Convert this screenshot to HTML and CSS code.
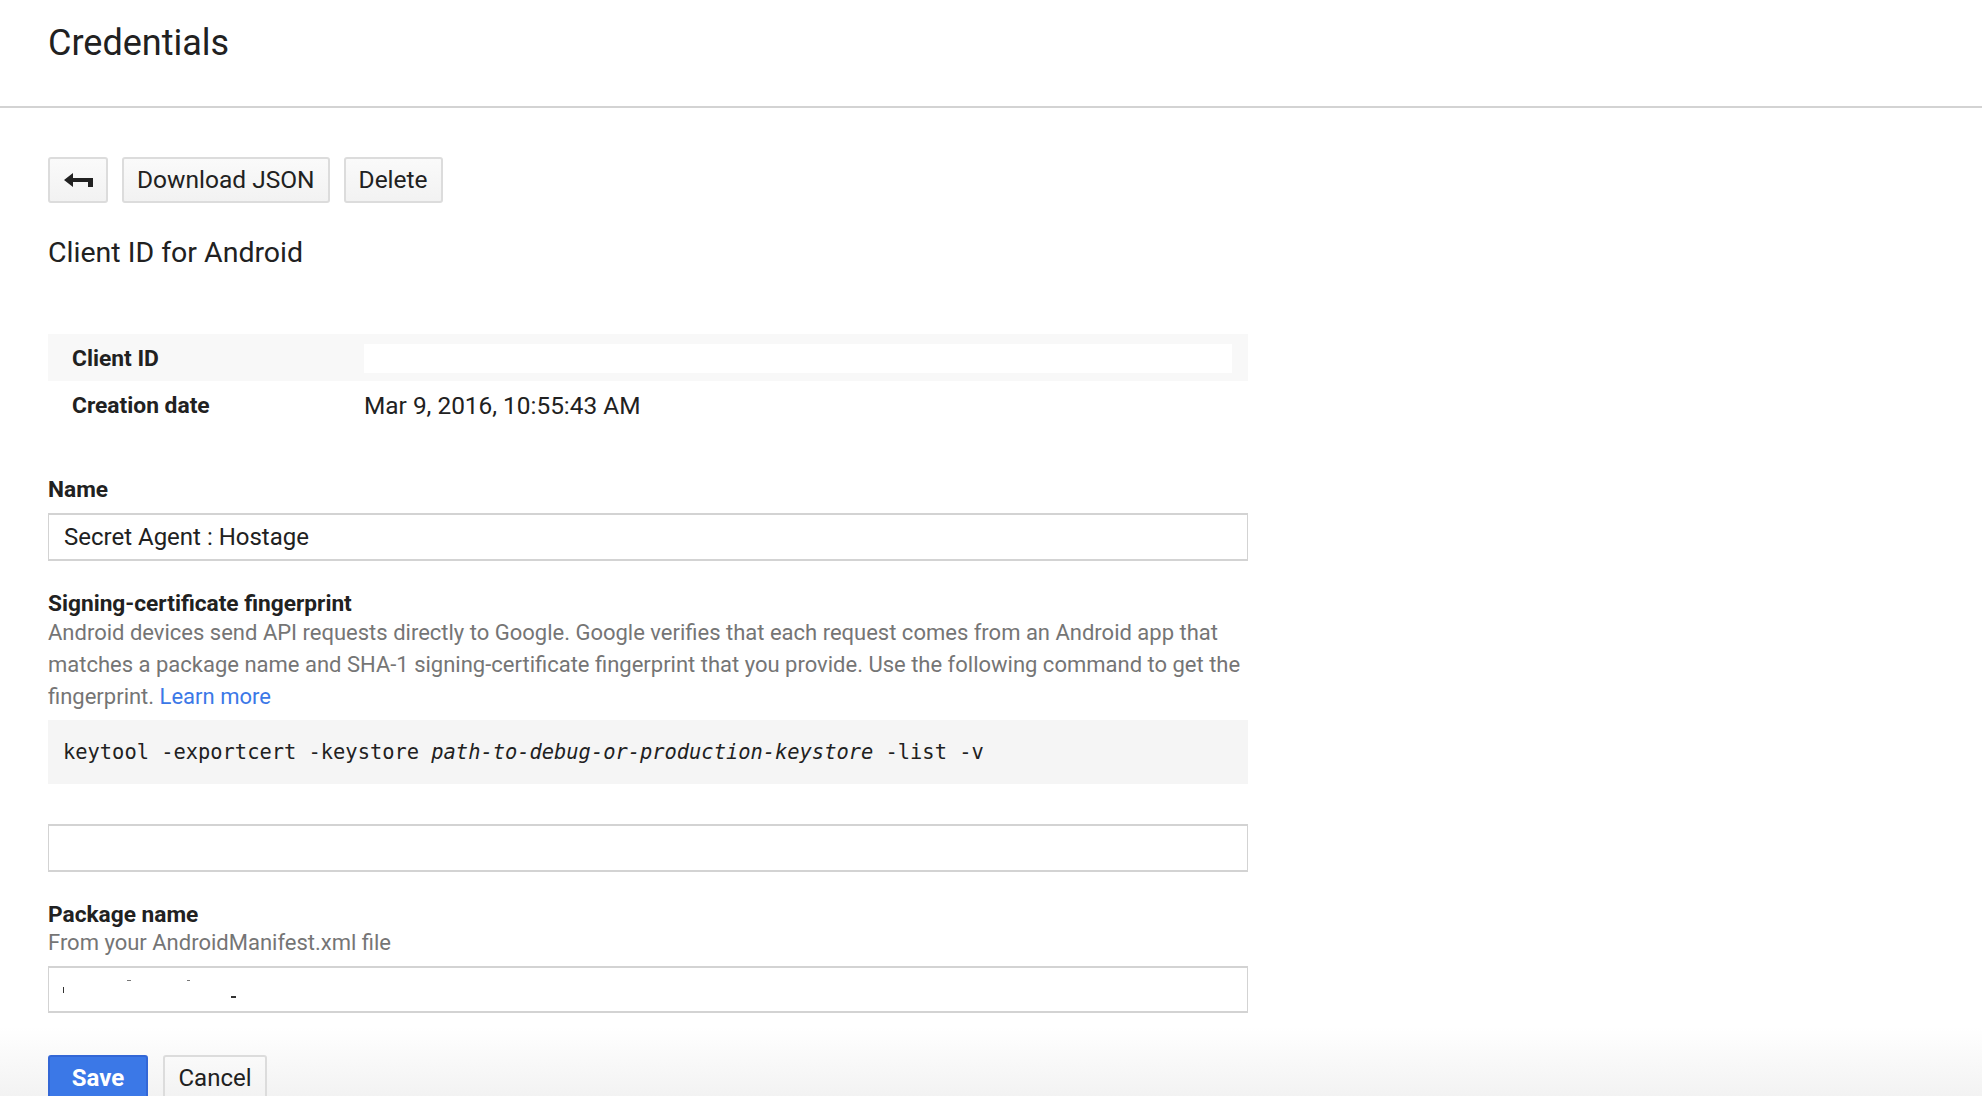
FILE: index.html
```html
<!DOCTYPE html>
<html lang="en">
<head>
<meta charset="utf-8">
<title>Credentials</title>
<link rel="stylesheet" href="styles.css">
</head>
<body>
<header class="page-header">
  <h1 class="page-title">Credentials</h1>
</header>
<main class="content">
  <div class="toolbar">
    <button class="btn btn-icon" type="button" aria-label="Back">
      <svg class="back-icon" viewBox="0 0 29 14" width="29" height="14"><path d="M0 7 L9 0 L9 5 L29 5 L29 14 L24 14 L24 9 L9 9 L9 14 Z" fill="#212121"/></svg>
    </button>
    <button class="btn" type="button">Download JSON</button>
    <button class="btn" type="button">Delete</button>
  </div>

  <h2 class="section-title">Client ID for Android</h2>

  <div class="info-table">
    <div class="info-row shaded">
      <div class="info-label">Client ID</div>
      <div class="info-value"><div class="redacted"></div></div>
    </div>
    <div class="info-row">
      <div class="info-label">Creation date</div>
      <div class="info-value">Mar 9, 2016, 10:55:43 AM</div>
    </div>
  </div>

  <div class="field field-name">
    <div class="field-label">Name</div>
    <div class="text-input">Secret Agent : Hostage</div>
  </div>

  <div class="field field-sign">
    <div class="field-label tight">Signing-certificate fingerprint</div>
    <p class="field-help">Android devices send API requests directly to Google. Google verifies that each request comes from an Android app that matches a package name and SHA-1 signing-certificate fingerprint that you provide. Use the following command to get the fingerprint. <a class="link" href="#">Learn more</a></p>
    <pre class="code-block">keytool -exportcert -keystore <em>path-to-debug-or-production-keystore</em> -list -v</pre>
    <div class="text-input empty"></div>
  </div>

  <div class="field field-package">
    <div class="field-label">Package name</div>
    <div class="field-sub">From your AndroidManifest.xml file</div>
    <div class="text-input package"><span class="mark m1"></span><span class="mark m2"></span><span class="mark m3"></span><span class="mark m4"></span></div>
  </div>
</main>
<footer class="page-footer">
  <button class="btn btn-primary" type="button">Save</button>
  <button class="btn" type="button">Cancel</button>
</footer>
</body>
</html>
```

FILE: styles.css
```css
html, body {
  margin: 0;
  padding: 0;
  height: 1096px;
  overflow: hidden;
  background: #ffffff;
}

body {
  font-family: Roboto, "Noto Sans", "Liberation Sans", sans-serif;
  color: #212121;
}

.page-header {
  border-bottom: 2px solid #d3d3d3;
  padding: 0 48px;
  box-sizing: border-box;
  height: 108px;
}

.page-title {
  margin: 0;
  padding-top: 21px;
  font-size: 36px;
  line-height: 44px;
  font-weight: 400;
  color: #212121;
}

.content {
  padding: 0 48px;
  width: 1200px;
}

.toolbar {
  display: flex;
  gap: 14px;
  margin-top: 49px;
}

.btn {
  font-family: Roboto, "Noto Sans", "Liberation Sans", sans-serif;
  font-size: 24.5px;
  color: #212121;
  height: 46px;
  padding: 0 13px;
  background: linear-gradient(#fafafa, #f2f2f2);
  border: 2px solid #dcdcdc;
  border-radius: 3px;
  display: inline-flex;
  align-items: center;
  justify-content: center;
  box-sizing: border-box;
  line-height: 1;
}

.btn-icon {
  width: 60px;
  padding: 0;
}

.back-icon {
  display: block;
}

.section-title {
  margin: 32px 0 0;
  font-size: 28.5px;
  line-height: 36px;
  font-weight: 400;
}

.info-table {
  margin-top: 63px;
}

.info-row {
  display: flex;
  align-items: center;
  font-size: 22.8px;
  height: 48px;
}

.info-row.shaded {
  background: #f8f8f8;
  height: 47px;
  padding-top: 1px;
  box-sizing: border-box;
}

.info-label {
  width: 292px;
  padding-left: 24px;
  font-weight: 700;
  flex: none;
}

.info-value {
  flex: 1;
  padding-right: 16px;
  font-size: 24.4px;
}

.redacted {
  height: 29px;
  background: #ffffff;
}

.field-name {
  margin-top: 47px;
}

.field-label {
  font-size: 22.7px;
  line-height: 28px;
  font-weight: 700;
}

.field-label.tight {
  line-height: 26px;
}

.text-input {
  margin-top: 9px;
  height: 48px;
  box-sizing: border-box;
  border: 2px solid #d3d3d3;
  border-left-width: 1px;
  border-right-width: 1px;
  background: #fff;
  font-size: 24px;
  padding: 0 15px;
  display: flex;
  align-items: center;
}

.field-sign {
  margin-top: 30px;
}

.field-help {
  margin: 0;
  font-size: 22px;
  line-height: 32px;
  color: #757575;
  width: 1200px;
}

.link {
  color: #3b78e7;
  text-decoration: none;
}

.code-block {
  margin: 7px 0 0;
  background: #f5f5f5;
  padding: 20px 15px;
  font-family: "DejaVu Sans Mono", "Liberation Mono", monospace;
  font-size: 20.4px;
  line-height: 24px;
  color: #212121;
}

.code-block em {
  font-style: italic;
}

.text-input.empty {
  margin-top: 40px;
}

.field-package {
  margin-top: 29px;
}

.field-sub {
  font-size: 22px;
  line-height: 28px;
  color: #757575;
}

.text-input.package {
  height: 47px;
  position: relative;
}

.mark {
  position: absolute;
  background: #333;
}

.m1 { left: 14px; top: 19px; width: 1px; height: 6px; }
.m2 { left: 78px; top: 12px; width: 4px; height: 1px; background: #777; }
.m3 { left: 138px; top: 12px; width: 3px; height: 1px; background: #777; }
.m4 { left: 182px; top: 28px; width: 5px; height: 2px; }

.page-footer {
  margin-top: 14px;
  padding: 28px 48px 20px;
  display: flex;
  gap: 15px;
  background: linear-gradient(#ffffff, #eeeeee);
}

.btn-primary {
  background: #3b78e7;
  border-color: #3367d6;
  color: #ffffff;
  font-weight: 700;
  font-size: 24px;
  width: 100px;
}

.page-footer .btn:not(.btn-primary) {
  font-size: 24px;
  padding: 0 13px;
  width: 104px;
}
```
